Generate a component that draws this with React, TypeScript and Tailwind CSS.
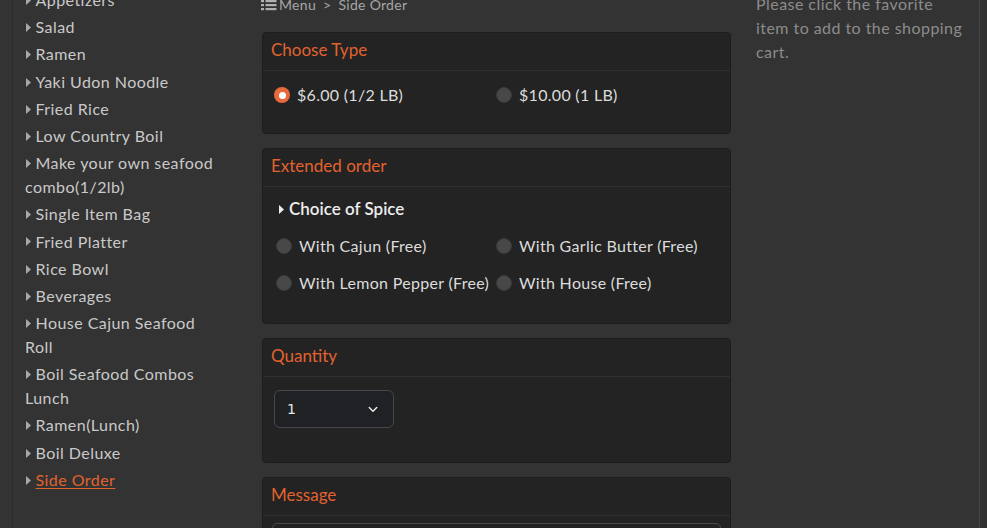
import React from "react";

const items: string[] = [
  "Appetizers",
  "Salad",
  "Ramen",
  "Yaki Udon Noodle",
  "Fried Rice",
  "Low Country Boil",
  "Make your own seafood combo(1/2lb)",
  "Single Item Bag",
  "Fried Platter",
  "Rice Bowl",
  "Beverages",
  "House Cajun Seafood Roll",
  "Boil Seafood Combos Lunch",
  "Ramen(Lunch)",
  "Boil Deluxe",
  "Side Order",
];

function Caret({ className }: { className?: string }) {
  return (
    <svg width="5" height="9" viewBox="0 0 5 9" className={className}>
      <path d="M0 0 L5 4.5 L0 9 Z" fill="currentColor" />
    </svg>
  );
}

function Radio({ checked, label }: { checked?: boolean; label: string }) {
  return (
    <div className="flex items-center gap-[7px] h-6">
      {checked ? (
        <span className="w-4 h-4 rounded-full bg-[#e8693c] flex items-center justify-center shrink-0">
          <span className="w-[7px] h-[7px] rounded-full bg-white" />
        </span>
      ) : (
        <span className="w-4 h-4 rounded-full bg-[#484848] border border-[#3c3c3c] shrink-0" />
      )}
      <span className="text-[16px] tracking-[0.3px] text-[#dcdcdc] whitespace-nowrap">{label}</span>
    </div>
  );
}

function Card({ title, children }: { title: string; children: React.ReactNode }) {
  return (
    <div className="bg-[#232323] border border-[#1d1d1d] rounded-[4px] overflow-hidden">
      <div className="h-[38px] flex items-center pl-[8px] pb-[3px] border-b border-[#303030] text-[17px] text-[#e2622f]">
        {title}
      </div>
      {children}
    </div>
  );
}

export default function App() {
  return (
    <div
      className="w-[987px] h-[528px] overflow-hidden bg-[#333333] flex"
      style={{ fontFamily: "Lato, 'Open Sans', sans-serif" }}
    >
      <div className="w-[12px] shrink-0" />
      {/* Sidebar */}
      <div className="w-[238px] shrink-0 border-l border-[#2a2a2a] pl-[12px] pr-[24px]">
        <ul className="mt-[-12px]">
          {items.map((it) => {
            const active = it === "Side Order";
            return (
              <li key={it} className="text-[16px] leading-[24px] tracking-[0.45px] mb-[3.2px] text-[#c9c9c9]">
                <Caret className="inline-block align-middle mr-[5px] ml-[0.5px] -mt-[3px] text-[#a8a8a8]" />
                {active ? (
                  <span className="text-[#e2622f] underline underline-offset-2">{it}</span>
                ) : (
                  <span>{it}</span>
                )}
              </li>
            );
          })}
        </ul>
      </div>

      {/* Main */}
      <div className="w-[490px] shrink-0 pl-[12px] pr-[9px]">
        <div className="h-[20px] mt-[-6px] flex items-center text-[14px] tracking-[0.3px] text-[#a6a6a6]">
          <svg width="16" height="12" viewBox="0 0 16 12" className="mr-[2px] mt-[2px] -ml-[1px]">
            <rect x="0" y="1" width="3" height="2.2" fill="#b0b0b0" />
            <rect x="0" y="5" width="3" height="2.2" fill="#b0b0b0" />
            <rect x="0" y="9" width="3" height="2.2" fill="#b0b0b0" />
            <rect x="4.5" y="1" width="11" height="2.2" fill="#b0b0b0" />
            <rect x="4.5" y="5" width="11" height="2.2" fill="#b0b0b0" />
            <rect x="4.5" y="9" width="11" height="2.2" fill="#b0b0b0" />
          </svg>
          <span>Menu</span>
          <span className="mx-[7px]">&gt;</span>
          <span>Side Order</span>
        </div>

        <div className="mt-[18px] flex flex-col gap-[14px]">
          <Card title="Choose Type">
            <div className="pl-[11px] pt-[12px] pb-[26px] grid grid-cols-[222px_1fr]">
              <Radio checked label="$6.00 (1/2 LB)" />
              <Radio label="$10.00 (1 LB)" />
            </div>
          </Card>

          <Card title="Extended order">
            <div className="pl-[13px] pt-[10px] pb-[28px]">
              <div className="h-6 flex items-center gap-[5px] text-[17px] font-semibold text-[#ededed] pl-[3px]">
                <Caret className="text-[#ededed]" />
                <span>Choice of Spice</span>
              </div>
              <div className="mt-[13px] grid grid-cols-[220px_1fr] gap-y-[13px]">
                <Radio label="With Cajun (Free)" />
                <Radio label="With Garlic Butter (Free)" />
                <Radio label="With Lemon Pepper (Free)" />
                <Radio label="With House (Free)" />
              </div>
            </div>
          </Card>

          <Card title="Quantity">
            <div className="pl-[11px] pt-[13px] pb-[34px]">
              <div className="w-[120px] h-[38px] rounded-[6px] border border-[#45474a] bg-[#1f2124] flex items-center justify-between pl-[12px] pr-[14px]">
                <span
                  className="text-[14px] text-[#e6e6e6]"
                  style={{ fontFamily: "'DejaVu Sans', sans-serif" }}
                >
                  1
                </span>
                <svg width="12" height="12" viewBox="0 0 16 16">
                  <path d="M3 6 L8 11 L13 6" stroke="#e6e6e6" strokeWidth="2" fill="none" strokeLinecap="round" strokeLinejoin="round" />
                </svg>
              </div>
            </div>
          </Card>

          <Card title="Message">
            <div className="px-[9px] pt-[7px]">
              <div className="h-[40px] rounded-[5px] border border-[#4a4a4a] bg-[#232323]" />
            </div>
          </Card>
        </div>
      </div>

      {/* Right column */}
      <div className="w-[240px] shrink-0 border-r border-[#444444] pl-[16px] pr-[12px]">
        <p className="mt-[-8px] text-[16px] leading-[24px] tracking-[0.45px] text-[#8c8c8c]">
          Please click the favorite item to add to the shopping cart.
        </p>
      </div>
      <div className="flex-1 bg-[#313131]" />
    </div>
  );
}
